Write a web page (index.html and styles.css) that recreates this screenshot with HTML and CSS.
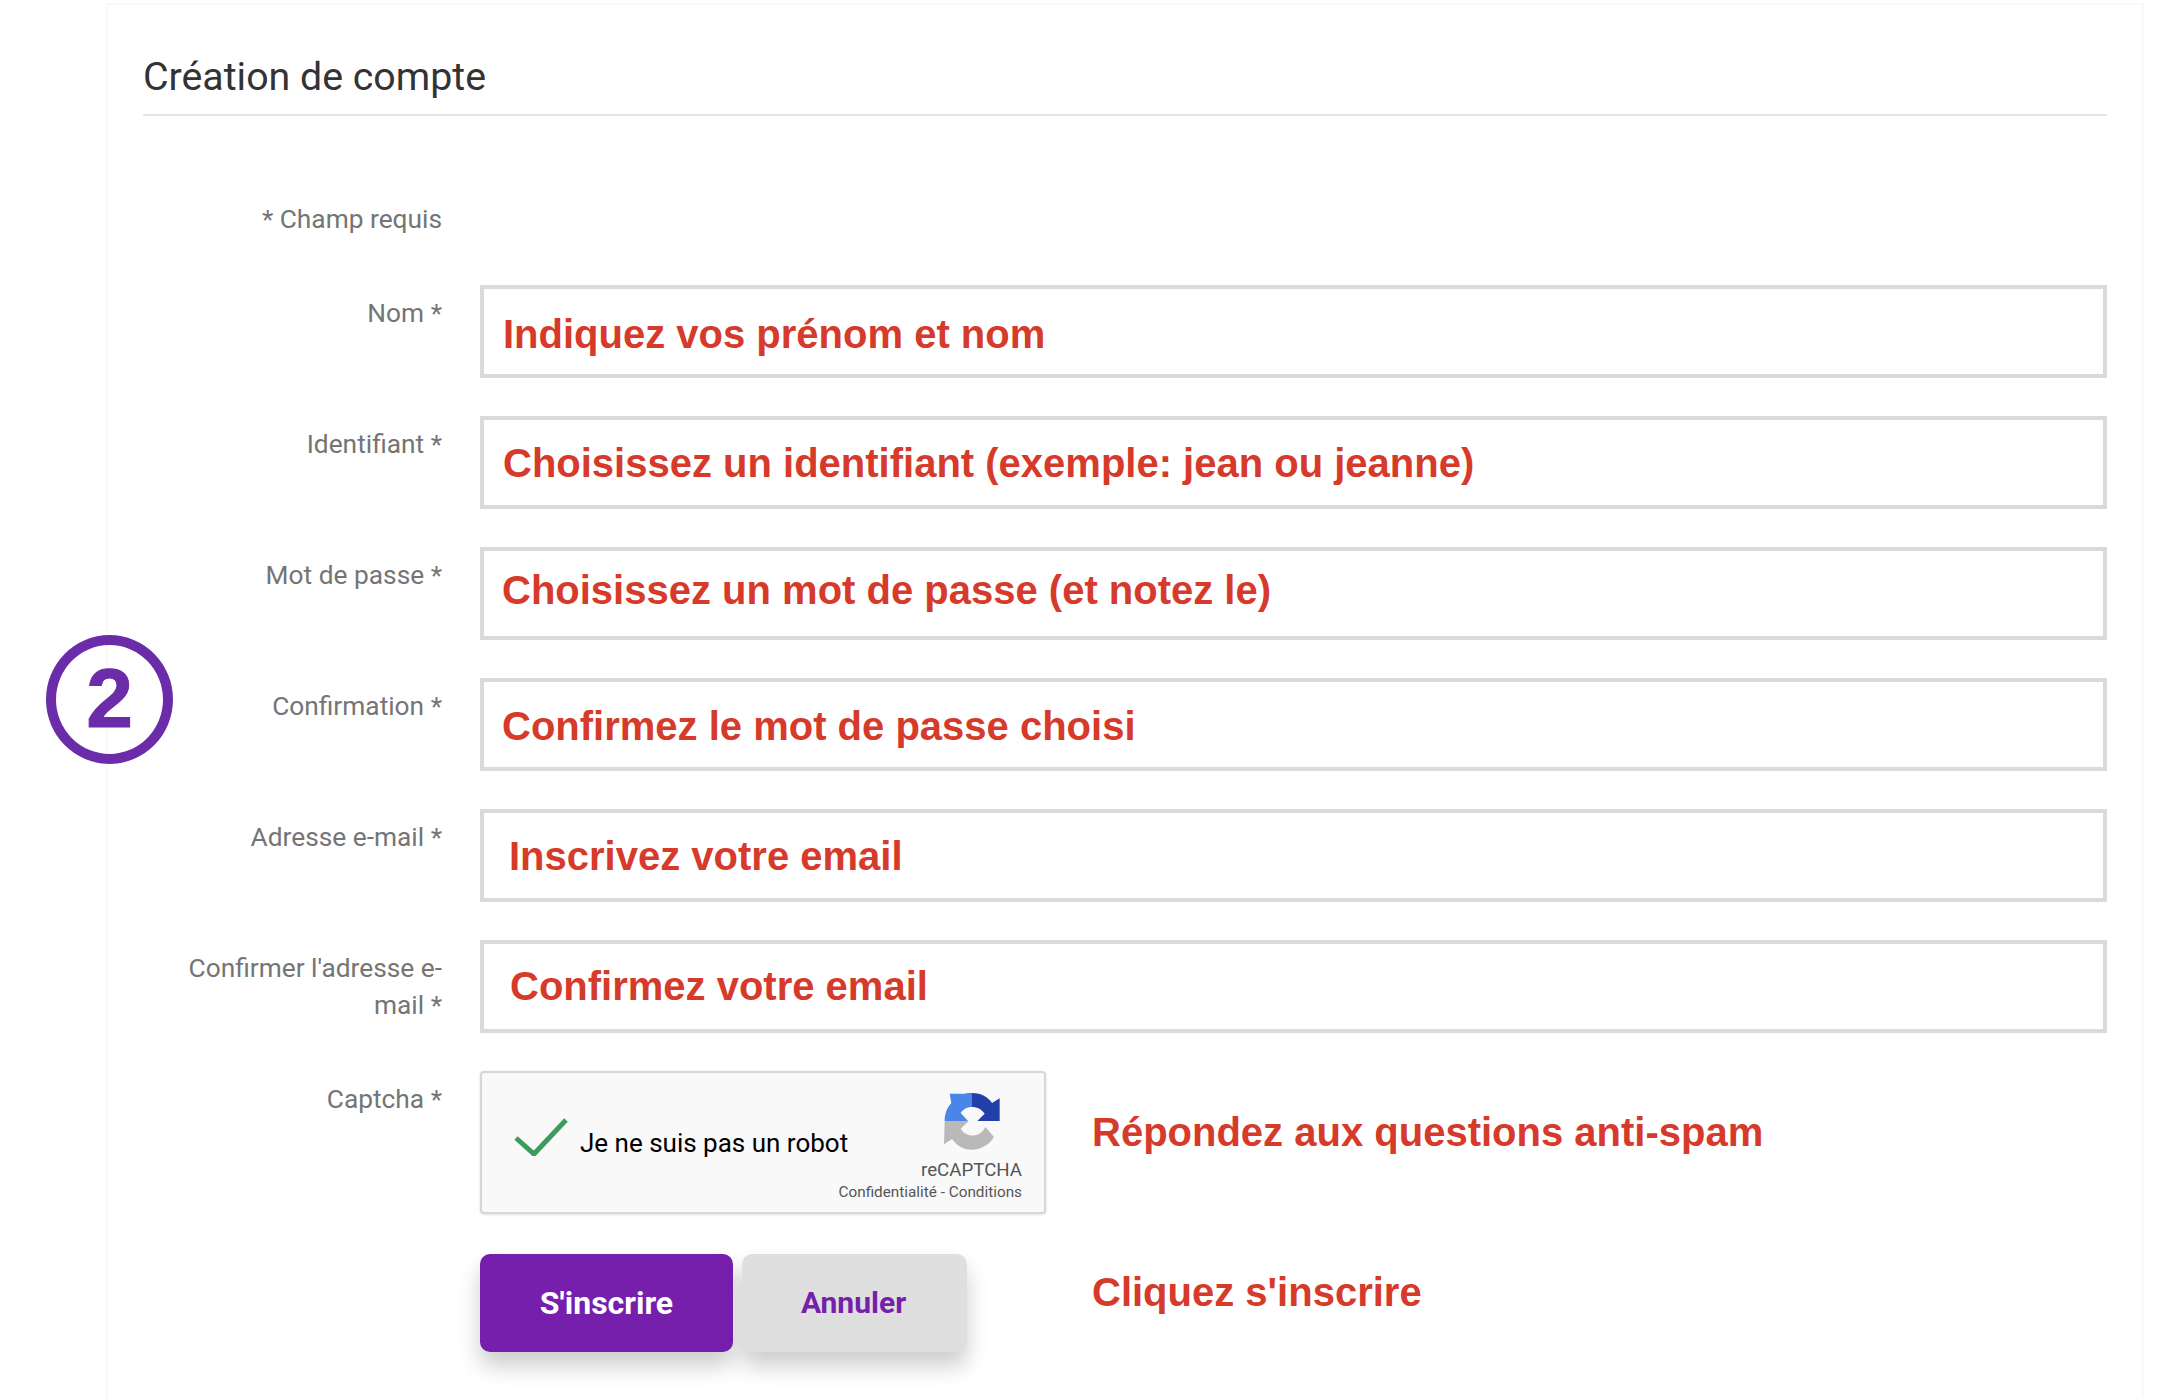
FILE: index.html
```html
<!DOCTYPE html>
<html lang="fr">
<head>
    <meta charset="UTF-8">
    <meta name="viewport" content="width=device-width, initial-scale=1.0">
    <title>Création de compte</title>
    <link rel="stylesheet" href="styles.css">
</head>
<body>
    <div class="panel">
        <h2 class="panel-title">Création de compte</h2>

        <div class="form">
            <div class="label required-note">* Champ requis</div>
            <div></div>

            <div class="label">Nom *</div>
            <div class="field"><span class="hint hint-a">Indiquez vos prénom et nom</span></div>

            <div class="label">Identifiant *</div>
            <div class="field"><span class="hint hint-b">Choisissez un identifiant (exemple: jean ou jeanne)</span></div>

            <div class="label">Mot de passe *</div>
            <div class="field"><span class="hint hint-c">Choisissez un mot de passe (et notez le)</span></div>

            <div class="label">Confirmation *</div>
            <div class="field"><span class="hint hint-d">Confirmez le mot de passe choisi</span></div>

            <div class="label">Adresse e-mail *</div>
            <div class="field"><span class="hint hint-e">Inscrivez votre email</span></div>

            <div class="label">Confirmer l'adresse e-mail *</div>
            <div class="field"><span class="hint hint-f">Confirmez votre email</span></div>

            <div class="label">Captcha *</div>
            <div class="side-row">
                <div class="captcha">
                    <svg class="captcha-check" width="54" height="38" viewBox="0 0 54 38">
                        <path d="M2 20 L20 36 L52 2" fill="none" stroke="#3d9b5d" stroke-width="5"/>
                    </svg>
                    <span class="captcha-text">Je ne suis pas un robot</span>
                    <div class="captcha-brand">
                        <svg class="captcha-logo" width="56" height="57" viewBox="338 68 168 171">
                            <path fill="#2340a8" d="M422 68C450 68 470 80 482 98L505 84V152H438L460 130C452 118 438 110 422 110Z"/>
                            <path fill="#4a86e8" d="M422 68V110C406 110 394 118 388 128L410 152H340C340 130 346 114 360 98L355 70H400C407 68 414 68 422 68Z"/>
                            <path fill="#b9b9b9" d="M340 152H412L388 175C398 192 416 198 436 194C448 190 456 182 462 170L488 200C472 226 446 238 420 238C396 238 376 226 362 206L338 222Z"/>
                        </svg>
                        <span class="captcha-name">reCAPTCHA</span>
                        <span class="captcha-links">Confidentialité - Conditions</span>
                    </div>
                </div>
                <span class="hint side-hint">Répondez aux questions anti-spam</span>
            </div>

            <div></div>
            <div class="side-row actions">
                <div class="buttons">
                    <button class="btn btn-primary">S'inscrire</button>
                    <button class="btn btn-cancel">Annuler</button>
                </div>
                <span class="hint side-hint">Cliquez s'inscrire</span>
            </div>
        </div>
    </div>

    <!-- step marker -->
    <div class="step">2</div>
</body>
</html>
```

FILE: styles.css
```css
* {
    margin: 0;
    padding: 0;
    box-sizing: border-box;
}
html, body {
    height: 1398px;
    overflow: hidden;
}
body {
    position: relative;
    background: #fff;
    font-family: Roboto, sans-serif;
}
.panel {
    width: 2038px;
    height: 1395px;
    margin: 3px 0 0 106px;
    padding: 0 35px;
    border: 2px solid #fdf8f1;
    border-bottom: none;
}
.panel-title {
    height: 111px;
    padding-top: 49px;
    font-size: 39.3px;
    line-height: 46px;
    font-weight: 400;
    color: #333;
    border-bottom: 2px solid #e6e6e6;
}
.form {
    display: grid;
    grid-template-columns: 299px 1fr;
    column-gap: 38px;
    row-gap: 38px;
    padding-top: 85px;
}
.label {
    padding-top: 10px;
    font-size: 26.3px;
    line-height: 37px;
    color: #757575;
    text-align: right;
}
.required-note {
    padding-top: 0;
    height: 46px;
}
.field {
    display: flex;
    align-items: center;
    height: 93px;
    border: 4px solid #dadada;
    background: #fff;
}
.hint {
    font-family: "Liberation Sans", Arial, sans-serif;
    font-weight: bold;
    font-size: 40px;
    line-height: 48px;
    color: #d63a2a;
    white-space: nowrap;
}
.hint-a { margin-left: 19px; margin-top: 4px; }
.hint-b { margin-left: 19px; }
.hint-c { margin-left: 18px; margin-bottom: 8px; }
.hint-d { margin-left: 18px; margin-top: 2px; }
.hint-e { margin-left: 25px; }
.hint-f { margin-left: 26px; margin-bottom: 2px; }

.side-row {
    display: flex;
    align-items: center;
}
.side-hint {
    margin-left: 46px;
    margin-bottom: 22px;
}
.captcha {
    display: flex;
    align-items: center;
    width: 566px;
    height: 143px;
    padding: 0 22px 0 32px;
    background: #f9f9f9;
    border: 2px solid #d6d6d6;
    border-radius: 4px;
    box-shadow: 0 1px 3px rgba(0, 0, 0, 0.12);
}
.captcha-check {
    flex: none;
    margin-top: -12px;
}
.captcha-text {
    margin-left: 12px;
    margin-right: -60px;
    font-size: 26px;
    color: #000;
    white-space: nowrap;
}
.captcha-brand {
    display: flex;
    flex-direction: column;
    align-items: flex-end;
    margin-left: auto;
    padding-top: 10px;
    color: #555;
}
.captcha-logo {
    margin-right: 22px;
}
.captcha-name {
    margin-top: 8px;
    font-size: 18.7px;
    line-height: 24px;
}
.captcha-links {
    font-size: 15.3px;
    line-height: 20px;
    white-space: nowrap;
}
.actions {
    margin-top: 2px;
}
.buttons {
    display: flex;
    gap: 9px;
    width: 566px;
}
.btn {
    height: 98px;
    border: none;
    border-radius: 10px;
    font-family: Roboto, sans-serif;
    font-weight: 700;
    box-shadow: 0 14px 22px rgba(0, 0, 0, 0.2);
}
.btn-primary {
    width: 253px;
    background: #761fad;
    color: #fff;
    font-size: 32px;
}
.btn-cancel {
    width: 225px;
    padding: 0 2px 2px 0;
    background: #dfdfdf;
    color: #761fad;
    font-size: 30px;
}
.step {
    position: absolute;
    left: 46px;
    top: 635px;
    width: 127px;
    height: 129px;
    border: 10px solid #6a2ca8;
    border-radius: 50%;
    font-family: "Liberation Sans", Arial, sans-serif;
    font-weight: bold;
    font-size: 84px;
    line-height: 107px;
    color: #6a2ca8;
    text-align: center;
    -webkit-text-stroke: 1px #6a2ca8;
}
```
